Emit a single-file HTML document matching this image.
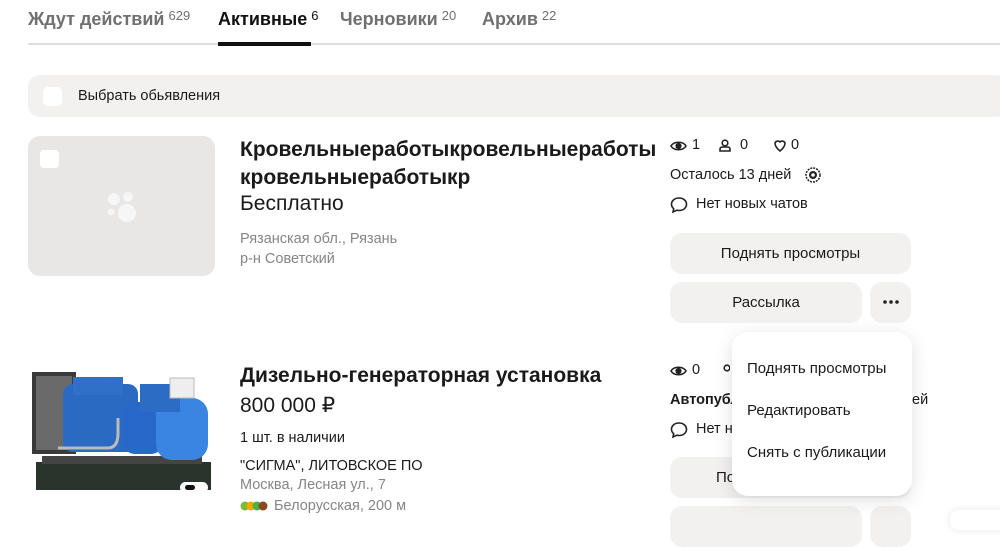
<!DOCTYPE html>
<html><head><meta charset="utf-8"><style>
*{margin:0;padding:0;box-sizing:border-box}
body{width:1000px;height:518px;overflow:hidden;background:#fff;font-family:"Liberation Sans",sans-serif;color:#1a1a1a;position:relative}
.a{position:absolute;white-space:nowrap}
.tab{font-size:18px;font-weight:bold;color:#707070;top:8px}
.tab sup{font-size:13px;font-weight:normal;vertical-align:5px;margin-left:4px}
.btn{position:absolute;background:#f2f1f0;border-radius:12px;font-size:15px;text-align:center;line-height:41px;height:41px}
.g{color:#858585}
.s{font-size:14.5px}
</style></head><body>
<div class="a tab" style="left:28px">Ждут действий<sup>629</sup></div>
<div class="a tab" style="left:218px;color:#111">Активные<sup>6</sup></div>
<div class="a tab" style="left:340px">Черновики<sup>20</sup></div>
<div class="a tab" style="left:482px">Архив<sup>22</sup></div>
<div class="a" style="left:28px;top:43px;width:972px;height:2px;background:#ddd"></div>
<div class="a" style="left:218px;top:42px;width:93px;height:4px;background:#111"></div>

<div class="a" style="left:28px;top:75px;width:980px;height:42px;background:#f2f1f0;border-radius:12px"></div>
<div class="a" style="left:43px;top:87px;width:19px;height:19px;background:#fff;border-radius:5px"></div>
<div class="a s" style="left:78px;top:88px">Выбрать обьявления</div>

<div class="a" style="left:28px;top:136px;width:187px;height:140px;background:#e8e7e6;border-radius:12px"></div>
<div class="a" style="left:40px;top:150px;width:19px;height:18px;background:#fff;border-radius:4px"></div>
<svg class="a" style="left:100px;top:185px" width="45" height="45"><circle cx="14" cy="14" r="6" fill="#f6f6f6"/><circle cx="28" cy="12" r="5" fill="#f6f6f6"/><circle cx="11" cy="27" r="3.5" fill="#f6f6f6"/><circle cx="27" cy="28" r="9" fill="#f6f6f6"/></svg>
<div class="a" style="left:240px;top:136px;font-size:21px;font-weight:bold;line-height:28px">Кровельныеработыкровельныеработы<br>кровельныеработыкр</div>
<div class="a" style="left:240px;top:192px;font-size:21px">Бесплатно</div>
<div class="a s g" style="left:240px;top:229px;line-height:20px">Рязанская обл., Рязань<br>р-н Советский</div>

<svg class="a" style="left:670px;top:138px" width="140" height="16" fill="none" stroke="#222" stroke-width="1.6"><path d="M1 8C4 3 13 3 16 8C13 13 4 13 1 8Z"/><circle cx="8.5" cy="8" r="2.3" fill="#222"/><circle cx="55" cy="5" r="2.8"/><path d="M50 13v-2q0-2 3-2h4q3 0 3 2v2z"/><path d="M105 5a3 3 0 0 1 5-1a3 3 0 0 1 5 1q0 4-5 8q-5-4-5-8z"/></svg>
<div class="a s" style="left:692px;top:137px">1</div>
<div class="a s" style="left:740px;top:137px">0</div>
<div class="a s" style="left:791px;top:137px">0</div>
<div class="a s" style="left:670px;top:167px">Осталось 13 дней</div>
<svg class="a" style="left:805px;top:167px" width="16" height="16"><circle cx="8" cy="8" r="7" fill="none" stroke="#222" stroke-width="1.5" stroke-dasharray="2 1"/><circle cx="8" cy="8" r="4" fill="#222"/><circle cx="8" cy="8" r="1.8" fill="#fff"/></svg>
<svg class="a" style="left:670px;top:196px" width="18" height="18"><path d="M9 2C4.5 2 1.5 4.8 1.5 8.3c0 1.8.8 3.3 2.2 4.4L3 16l3.8-1.8c.7.2 1.4.3 2.2.3 4.5 0 7.5-2.8 7.5-6.2S13.5 2 9 2z" fill="none" stroke="#222" stroke-width="1.6"/></svg>
<div class="a s" style="left:696px;top:196px">Нет новых чатов</div>
<div class="btn" style="left:670px;top:233px;width:241px">Поднять просмотры</div>
<div class="btn" style="left:670px;top:282px;width:192px">Рассылка</div>
<div class="btn" style="left:870px;top:282px;width:41px"><svg width="18" height="41"><circle cx="3" cy="20" r="1.8" fill="#222"/><circle cx="9" cy="20" r="1.8" fill="#222"/><circle cx="15" cy="20" r="1.8" fill="#222"/></svg></div>

<svg class="a" style="left:28px;top:360px" width="187" height="140">
<rect x="4" y="12" width="44" height="82" fill="#3a3a3a"/><rect x="8" y="16" width="36" height="74" fill="#6a6a6a"/>
<rect x="8" y="102" width="175" height="28" fill="#2a342d"/><rect x="14" y="96" width="160" height="8" fill="#444"/>
<rect x="35" y="24" width="75" height="68" rx="10" fill="#2a6ac2"/><rect x="45" y="17" width="50" height="18" fill="#3170c8"/>
<rect x="95" y="42" width="40" height="52" rx="12" fill="#2868c8"/><rect x="128" y="38" width="52" height="62" rx="16" fill="#3a85e2"/>
<rect x="112" y="24" width="40" height="28" fill="#2c6cc4"/><rect x="142" y="18" width="24" height="20" fill="#eee" stroke="#bbb"/>
<path d="M30 88h50q10 0 10-15v-15" stroke="#bbb" stroke-width="3" fill="none"/>
<rect x="152" y="122" width="28" height="11" rx="5.5" fill="#fff"/><rect x="157" y="125" width="10" height="5" rx="2.5" fill="#111"/>
</svg>
<div class="a" style="left:240px;top:364px;font-size:21px;font-weight:bold">Дизельно-генераторная установка</div>
<div class="a" style="left:240px;top:393px;font-size:21px">800 000 ₽</div>
<div class="a s" style="left:240px;top:430px">1 шт. в наличии</div>
<div class="a s" style="left:240px;top:458px">"СИГМА", ЛИТОВСКОЕ ПО</div>
<div class="a s g" style="left:240px;top:477px">Москва, Лесная ул., 7</div>
<svg class="a" style="left:240px;top:500px" width="30" height="12"><circle cx="5" cy="6" r="4.5" fill="#7cbb3a"/><circle cx="11" cy="6" r="4.5" fill="#f7a600"/><circle cx="17" cy="6" r="4.5" fill="#4caf50"/><circle cx="23" cy="6" r="4.5" fill="#8b4a1e"/></svg>
<div class="a s g" style="left:274px;top:498px">Белорусская, 200 м</div>

<svg class="a" style="left:670px;top:363px" width="60" height="16" fill="none" stroke="#222" stroke-width="1.6"><path d="M1 8C4 3 13 3 16 8C13 13 4 13 1 8Z"/><circle cx="8.5" cy="8" r="2.3" fill="#222"/><circle cx="57" cy="5" r="2.8"/></svg>
<div class="a s" style="left:692px;top:362px">0</div>
<div class="a s" style="left:670px;top:392px;font-weight:bold">Автопубликация</div>
<div class="a s" style="left:912px;top:392px">ей</div>
<svg class="a" style="left:670px;top:421px" width="18" height="18"><path d="M9 2C4.5 2 1.5 4.8 1.5 8.3c0 1.8.8 3.3 2.2 4.4L3 16l3.8-1.8c.7.2 1.4.3 2.2.3 4.5 0 7.5-2.8 7.5-6.2S13.5 2 9 2z" fill="none" stroke="#222" stroke-width="1.6"/></svg>
<div class="a s" style="left:696px;top:421px">Нет новых</div>
<div class="btn" style="left:670px;top:457px;width:241px;text-align:left;padding-left:46px">По</div>
<div class="btn" style="left:670px;top:506px;width:192px"></div>
<div class="btn" style="left:870px;top:506px;width:41px"></div>

<div class="a" style="left:732px;top:332px;width:180px;height:164px;background:#fff;border-radius:16px;box-shadow:0 4px 18px rgba(0,0,0,.13)"></div>
<div class="a" style="left:747px;top:360px;font-size:15px">Поднять просмотры</div>
<div class="a" style="left:747px;top:402px;font-size:15px">Редактировать</div>
<div class="a" style="left:747px;top:444px;font-size:15px">Снять с публикации</div>
<div class="a" style="left:950px;top:510px;width:60px;height:20px;background:#fff;border-radius:8px;box-shadow:0 0 8px rgba(0,0,0,.1)"></div>
</body></html>
